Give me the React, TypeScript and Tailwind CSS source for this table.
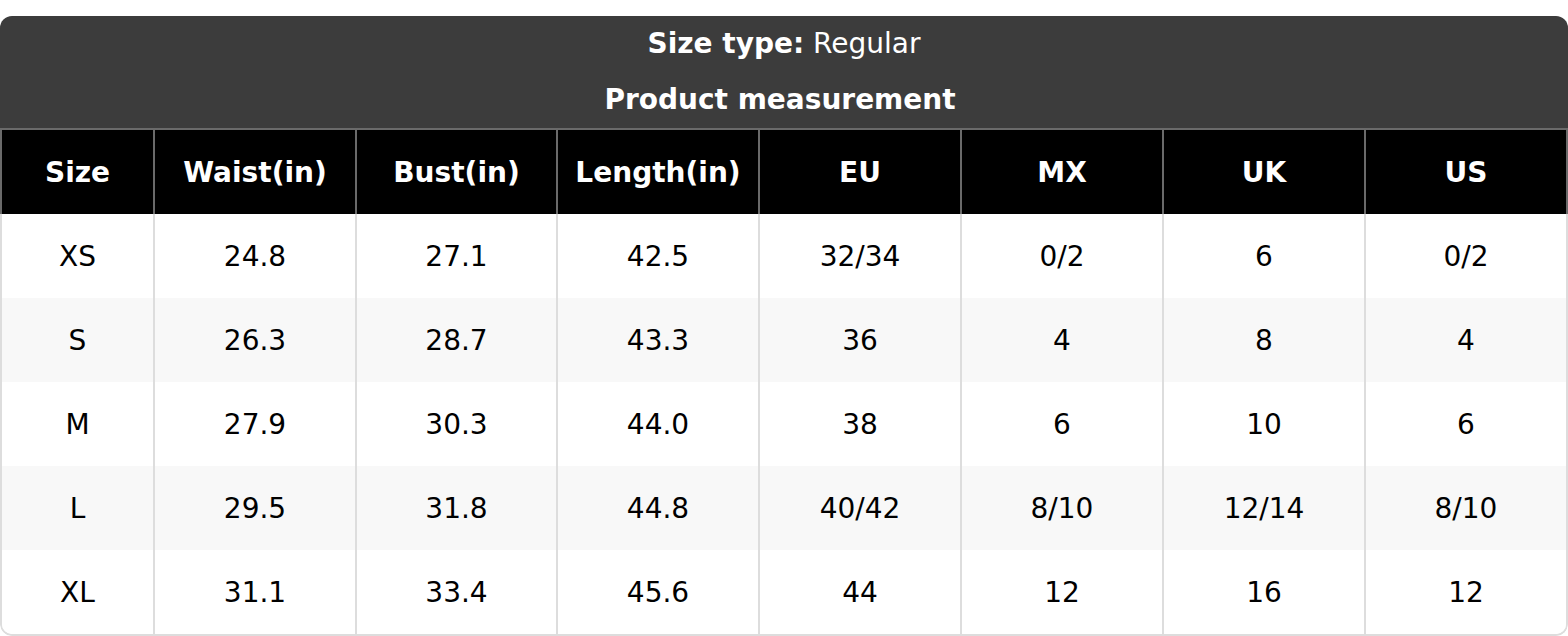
import React from "react";

const headers = ["Size", "Waist(in)", "Bust(in)", "Length(in)", "EU", "MX", "UK", "US"];
const rows = [
  ["XS", "24.8", "27.1", "42.5", "32/34", "0/2", "6", "0/2"],
  ["S", "26.3", "28.7", "43.3", "36", "4", "8", "4"],
  ["M", "27.9", "30.3", "44.0", "38", "6", "10", "6"],
  ["L", "29.5", "31.8", "44.8", "40/42", "8/10", "12/14", "8/10"],
  ["XL", "31.1", "33.4", "45.6", "44", "12", "16", "12"],
];

const cols = "grid grid-cols-[151px_202px_201px_202px_202px_202px_202px_202px]";

export default function App() {
  return (
    <div
      className="w-[1568px] h-[636px] bg-white pt-[16px]"
      style={{ fontFamily: '"DejaVu Sans", sans-serif' }}
    >
      <div className="w-[1568px] rounded-[12px] overflow-hidden">
        <div className="bg-[#3c3c3c] text-white text-[28px] leading-[34px] flex flex-col items-center pt-[11px] pb-[11px] gap-[22px]">
          <div>
            <span className="font-bold">Size type:</span> Regular
          </div>
          <div className="font-bold pr-[8px]">Product measurement</div>
        </div>
        <div className={`${cols} bg-black border-x-2 border-t-2 border-[#6a6a6a] h-[86px]`}>
          {headers.map((h, i) => (
            <div
              key={h}
              className={`flex items-center justify-center pt-[1px] text-white font-bold text-[28px] ${
                i > 0 ? "border-l-2 border-[#6a6a6a]" : ""
              }`}
            >
              {h}
            </div>
          ))}
        </div>
        <div className="border-x-2 border-b-2 border-[#dddddd] rounded-b-[12px] overflow-hidden">
          {rows.map((r, ri) => (
            <div
              key={ri}
              className={`${cols} h-[84px] ${ri % 2 === 1 ? "bg-[#f8f8f8]" : "bg-white"}`}
            >
              {r.map((c, ci) => (
                <div
                  key={ci}
                  className={`flex items-center justify-center pt-[1px] text-[#000000] text-[28px] ${
                    ci > 0 ? "border-l-2 border-[#dddddd]" : ""
                  }`}
                >
                  {c}
                </div>
              ))}
            </div>
          ))}
        </div>
      </div>
    </div>
  );
}
